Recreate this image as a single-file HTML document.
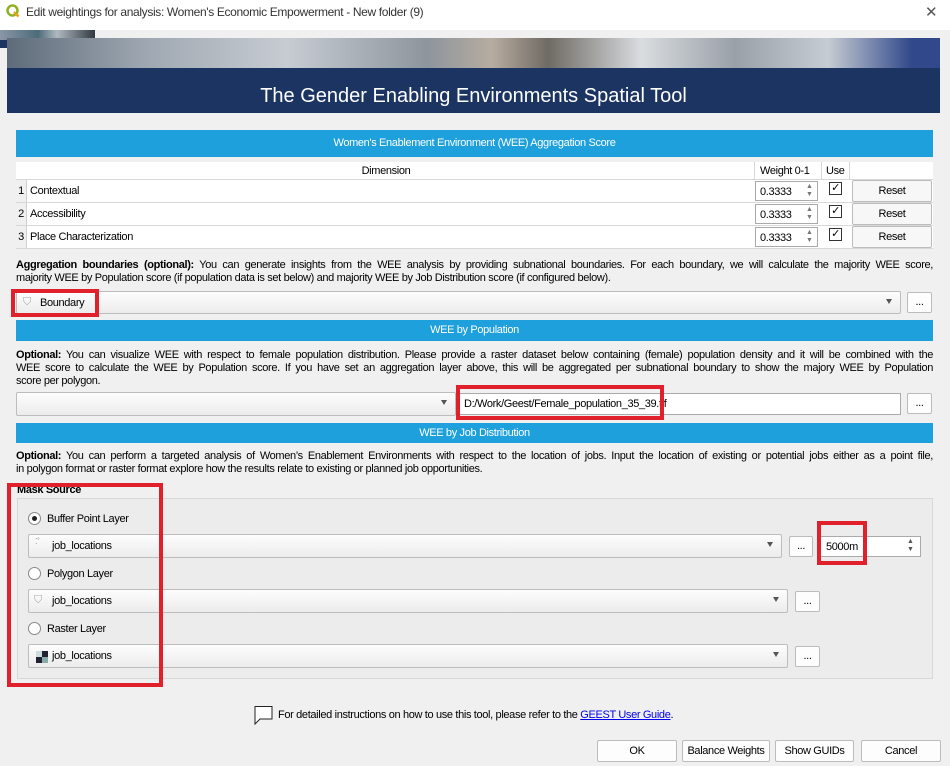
<!DOCTYPE html>
<html><head><meta charset="utf-8"><style>
*{box-sizing:border-box;margin:0;padding:0}
body{width:950px;height:766px;background:#f0f0f0;font-family:"Liberation Sans",sans-serif;font-size:11px;color:#000;position:relative;overflow:hidden;letter-spacing:-0.35px}
.a{position:absolute;white-space:nowrap}
.hdr{position:absolute;left:16px;width:917px;background:#1ea0dc;color:#fff;text-align:center;font-size:11px}
.cb{position:absolute;background:linear-gradient(#fdfdfd,#ececec);border:1px solid #bdbdbd;border-radius:2px}
.cb .ar{position:absolute;right:8px;top:7px;width:0;height:0;border-left:3.5px solid transparent;border-right:3.5px solid transparent;border-top:5px solid #555}
.bt{position:absolute;background:#fdfdfd;border:1px solid #bcbcbc;border-radius:2px;text-align:center;line-height:18px}
.red{position:absolute;border:4px solid #e0202a}
.row{position:absolute;left:16px;width:917px;height:23px;background:#fff;border-bottom:1px solid #d8d8d8}
.num{position:absolute;left:0;width:11px;height:22px;background:#f0f0f0;border-right:1px solid #d0d0d0;text-align:center;line-height:22px}
.just{display:block;text-align:justify;text-align-last:justify;white-space:nowrap}
.rad{position:absolute;width:13px;height:13px;border:1px solid #888;border-radius:50%;background:#fff}
.line{position:absolute;line-height:13px}
</style></head><body>
<div class="a" style="left:0;top:0;width:950px;height:30px;background:#fff"></div>
<svg class="a" style="left:6px;top:4px" width="14" height="14" viewBox="0 0 14 14"><circle cx="6.5" cy="6.5" r="5" fill="none" stroke="#93b023" stroke-width="2.5"/><path d="M8 8 L12.5 12.5" stroke="#e7a01a" stroke-width="2.5"/></svg>
<div class="a" style="left:26px;top:5px;font-size:12px;color:#333">Edit weightings for analysis: Women's Economic Empowerment - New folder (9)</div>
<div class="a" style="left:925px;top:3px;font-size:15px;color:#555">✕</div>
<div class="a" style="left:0;top:30px;width:95px;height:10px;background:linear-gradient(90deg,#8a96a6,#4c6c7a 40%,#b0b8c0 60%,#303840)"></div>
<div class="a" style="left:7px;top:38px;width:933px;height:32px;background:linear-gradient(90deg,#5d6b7a 0%,#9fa8b2 15%,#c7ccd2 30%,#8d959e 45%,#b7aca0 52%,#6f6a64 58%,#d9dde0 68%,#9aa0a8 78%,#c6ccd3 88%,#31488a 97%)"></div>
<div class="a" style="left:7px;top:68px;width:933px;height:45px;background:#1b3461"></div>
<div class="a" style="left:0;top:40px;width:7px;height:8px;background:#1b3461"></div>
<div class="a" style="left:7px;top:85px;width:933px;text-align:center;color:#fff;font-size:20px;letter-spacing:0">The Gender Enabling Environments Spatial Tool</div>
<div class="hdr" style="top:130px;height:27px;line-height:27px">Women's Enablement Environment (WEE) Aggregation Score</div>
<div class="a" style="left:16px;top:162px;width:917px;height:18px;background:#fff;border-bottom:1px solid #d8d8d8"></div>
<div class="a" style="left:16px;top:165px;width:740px;text-align:center">Dimension</div>
<div class="a" style="left:754px;top:162px;width:1px;height:18px;background:#d8d8d8"></div>
<div class="a" style="left:760px;top:165px">Weight 0-1</div>
<div class="a" style="left:821px;top:162px;width:1px;height:18px;background:#d8d8d8"></div>
<div class="a" style="left:826px;top:165px">Use</div>
<div class="a" style="left:849px;top:162px;width:1px;height:18px;background:#d8d8d8"></div>
<div class="row" style="top:180px"><div class="num">1</div><div class="a" style="left:14px;top:5px">Contextual</div></div>
<div class="row" style="top:203px"><div class="num">2</div><div class="a" style="left:14px;top:5px">Accessibility</div></div>
<div class="row" style="top:226px"><div class="num">3</div><div class="a" style="left:14px;top:5px">Place Characterization</div></div>
<div class="a" style="left:755px;top:181px;width:63px;height:20px;border:1px solid #aaa;background:#fff;padding:4px 0 0 4px">0.3333<span class="a" style="left:50px;top:1px;font-size:7px;color:#777;line-height:8px">▲<br>▼</span></div>
<div class="a" style="left:755px;top:204px;width:63px;height:20px;border:1px solid #aaa;background:#fff;padding:4px 0 0 4px">0.3333<span class="a" style="left:50px;top:1px;font-size:7px;color:#777;line-height:8px">▲<br>▼</span></div>
<div class="a" style="left:755px;top:227px;width:63px;height:20px;border:1px solid #aaa;background:#fff;padding:4px 0 0 4px">0.3333<span class="a" style="left:50px;top:1px;font-size:7px;color:#777;line-height:8px">▲<br>▼</span></div>
<div class="a" style="left:829px;top:182px;width:13px;height:13px;border:1px solid #333;background:#fff;font-size:11px;line-height:11px;text-align:center">✓</div>
<div class="a" style="left:829px;top:205px;width:13px;height:13px;border:1px solid #333;background:#fff;font-size:11px;line-height:11px;text-align:center">✓</div>
<div class="a" style="left:829px;top:228px;width:13px;height:13px;border:1px solid #333;background:#fff;font-size:11px;line-height:11px;text-align:center">✓</div>
<div class="bt" style="left:852px;top:180px;width:80px;height:22px;line-height:20px;background:#f7f7f7">Reset</div>
<div class="bt" style="left:852px;top:203px;width:80px;height:22px;line-height:20px;background:#f7f7f7">Reset</div>
<div class="bt" style="left:852px;top:226px;width:80px;height:22px;line-height:20px;background:#f7f7f7">Reset</div>
<div class="line" style="left:16px;top:259px;width:917px"><span class="just"><b>Aggregation boundaries (optional):</b> You can generate insights from the WEE analysis by providing subnational boundaries. For each boundary, we will calculate the majority WEE score,</span></div>
<div class="line a" style="left:16px;top:272px">majority WEE by Population score (if population data is set below) and majority WEE by Job Distribution score (if configured below).</div>
<div class="cb" style="left:16px;top:291px;width:885px;height:23px"><span class="a" style="left:6px;top:4px;color:#aaa">⛉</span><span class="a" style="left:23px;top:5px">Boundary</span><div class="ar"></div></div>
<div class="bt" style="left:907px;top:292px;width:25px;height:21px">...</div>
<div class="red" style="left:11px;top:289px;width:88px;height:28px"></div>
<div class="hdr" style="top:320px;height:21px;line-height:21px">WEE by Population</div>
<div class="line" style="left:16px;top:349px;width:917px"><span class="just"><b>Optional:</b> You can visualize WEE with respect to female population distribution. Please provide a raster dataset below containing (female) population density and it will be combined with the</span><span class="just">WEE score to calculate the WEE by Population score. If you have set an aggregation layer above, this will be aggregated per subnational boundary to show the majory WEE by Population</span>score per polygon.</div>
<div class="cb" style="left:16px;top:392px;width:440px;height:24px"><div class="ar"></div></div>
<div class="a" style="left:459px;top:393px;width:442px;height:22px;background:#fff;border:1px solid #aaa;padding:4px 0 0 4px">D:/Work/Geest/Female_population_35_39.tif</div>
<div class="bt" style="left:907px;top:393px;width:25px;height:21px">...</div>
<div class="red" style="left:456px;top:385px;width:208px;height:35px"></div>
<div class="hdr" style="top:423px;height:20px;line-height:20px">WEE by Job Distribution</div>
<div class="line" style="left:16px;top:450px;width:917px"><span class="just"><b>Optional:</b> You can perform a targeted analysis of Women’s Enablement Environments with respect to the location of jobs. Input the location of existing or potential jobs either as a point file,</span>in polygon format or raster format explore how the results relate to existing or planned job opportunities.</div>
<div class="a" style="left:17px;top:498px;width:916px;height:181px;border:1px solid #d8d8d8;background:#ececec"></div>
<div class="a" style="left:17px;top:484px;font-weight:bold">Mask Source</div>
<div class="rad" style="left:28px;top:512px"><div class="a" style="left:3px;top:3px;width:5px;height:5px;border-radius:50%;background:#222"></div></div>
<div class="a" style="left:47px;top:513px">Buffer Point Layer</div>
<div class="cb" style="left:28px;top:534px;width:754px;height:24px"><span class="a" style="left:6px;top:2px;font-size:8px;color:#999">⁚˚</span><span class="a" style="left:23px;top:5px">job_locations</span><div class="ar"></div></div>
<div class="bt" style="left:789px;top:536px;width:24px;height:21px">...</div>
<div class="a" style="left:820px;top:536px;width:101px;height:21px;background:#fff;border:1px solid #aaa;padding:4px 0 0 5px">5000m<span class="a" style="left:86px;top:1px;font-size:7px;color:#555;line-height:8px">▲<br>▼</span></div>
<div class="red" style="left:817px;top:521px;width:50px;height:44px"></div>
<div class="rad" style="left:28px;top:567px"></div>
<div class="a" style="left:47px;top:568px">Polygon Layer</div>
<div class="cb" style="left:28px;top:589px;width:760px;height:24px"><span class="a" style="left:5px;top:4px;color:#aaa">⛉</span><span class="a" style="left:23px;top:5px">job_locations</span><div class="ar"></div></div>
<div class="bt" style="left:795px;top:591px;width:25px;height:21px">...</div>
<div class="rad" style="left:28px;top:622px"></div>
<div class="a" style="left:47px;top:623px">Raster Layer</div>
<div class="cb" style="left:28px;top:644px;width:760px;height:24px"><span class="a" style="left:7px;top:6px;width:12px;height:12px;background:conic-gradient(#223 0 25%,#8aa 0 50%,#223 0 75%,#cdd 0)"></span><span class="a" style="left:23px;top:5px">job_locations</span><div class="ar"></div></div>
<div class="bt" style="left:795px;top:646px;width:25px;height:21px">...</div>
<div class="red" style="left:7px;top:483px;width:156px;height:204px"></div>
<svg class="a" style="left:252px;top:704px" width="22" height="22" viewBox="0 0 22 22"><path d="M2.5 2.5 H20 V15 H8 L3 20 V2.5 Z" fill="#fff" stroke="#222" stroke-width="1"/></svg>
<div class="a" style="left:278px;top:709px">For detailed instructions on how to use this tool, please refer to the <span style="color:#0000ee;text-decoration:underline">GEEST User Guide</span>.</div>
<div class="bt" style="left:597px;top:740px;width:80px;height:22px;line-height:20px">OK</div>
<div class="bt" style="left:682px;top:740px;width:88px;height:22px;line-height:20px">Balance Weights</div>
<div class="bt" style="left:775px;top:740px;width:79px;height:22px;line-height:20px">Show GUIDs</div>
<div class="bt" style="left:861px;top:740px;width:80px;height:22px;line-height:20px">Cancel</div>
</body></html>
